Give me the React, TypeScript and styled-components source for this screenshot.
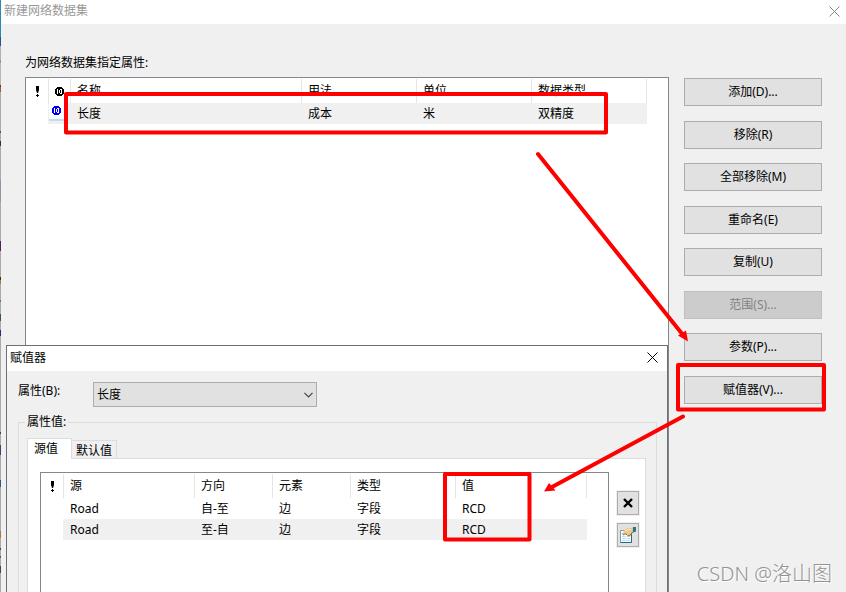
import React from "react";
import styled, { createGlobalStyle } from "styled-components";

const GlobalStyle = createGlobalStyle`
  *, *::before, *::after { box-sizing: border-box; }
  body {
    margin: 0;
    background: #f0f0f0;
    color: #000;
    font: 12px/16px "Noto Sans", "Noto Sans CJK SC", sans-serif;
  }
  button, select { font: inherit; color: inherit; }
`;

const Screen = styled.div`
  position: relative;
  display: flex;
  height: 100vh;
  overflow: hidden;
`;

const DesktopEdge = styled.div`
  flex: none;
  width: 1px;
  background: linear-gradient(
    #2b8ab5 0 37px, #2d4f8c 37px 46px, #b4b0b0 46px 60px, #b08880 60px 63px,
    #b8b8b8 63px 85px, #444 85px 87px, #a05a38 87px 92px, #aaa 92px 131px,
    #555 131px 133px, #aaa 133px 141px, #333 141px 146px, #aaa 146px 180px,
    #8c98a8 180px 202px, #aaa 202px 241px, #5c1a68 241px 251px, #aaa 251px 277px,
    #333 277px 280px, #b07828 280px 284px, #aaa 284px 300px, #3c7ca8 300px 302px,
    #aaa 302px 314px, #356 314px 321px, #aaa 321px 330px, #3c2468 330px 336px,
    #aaa 336px 432px, #444 432px 434px, #aaa 434px 445px, #48406c 445px 455px,
    #aaa 455px 480px, #357 480px 487px, #aaa 487px 531px, #b07838 531px 538px,
    #aaa 538px 548px, #733 548px 550px, #aaa 550px 556px, #368 556px 558px,
    #aaa 558px 566px, #444 566px 573px, #aaa 573px
  );
`;

const Window = styled.main`
  flex: 1;
  min-width: 0;
  display: flex;
  flex-direction: column;
`;

const TitleBar = styled.header<{ $inactive?: boolean }>`
  display: flex;
  flex: none;
  align-items: center;
  justify-content: space-between;
  height: ${(p) => (p.$inactive ? 24 : 25)}px;
  padding: ${(p) => (p.$inactive ? "0 6px 2px 3px" : "0 9px 2px 3px")};
  background: #fff;
  color: ${(p) => (p.$inactive ? "#999" : "#000")};
`;

const Title = styled.h1`
  margin: 0;
  font: inherit;
`;

const CloseButton = styled.button`
  display: flex;
  padding: 0;
  border: 0;
  background: none;
`;

const WindowBody = styled.div`
  flex: 1;
  min-height: 0;
  display: flex;
  gap: 15px;
  padding: 31px 24px 0;
`;

const AttributeSection = styled.section`
  flex: 1;
  min-width: 0;
  display: flex;
  flex-direction: column;
  gap: 6px;
`;

const SectionLabel = styled.h2`
  margin: 0;
  font: inherit;
`;

const ListView = styled.div`
  flex: 1;
  min-width: 0;
  padding-top: 1px;
  overflow: hidden;
  background: #fff;
  border: 1px solid #828790;
  border-bottom: 0;
`;

const Table = styled.table`
  table-layout: fixed;
  width: 0;
  border-collapse: separate;
  border-spacing: 0;
`;

const Col = styled.col<{ $w: number }>`
  width: ${(p) => p.$w}px;
`;

const HeadCell = styled.th`
  height: 24px;
  padding: 0 0 0 6px;
  border-left: 1px solid #e5e5e5;
  text-align: left;
  font-weight: normal;
  white-space: nowrap;
  &:first-child { border-left-color: transparent; }
  &:last-child { border-right: 1px solid #e5e5e5; }
  svg { display: block; }
`;

const Row = styled.tr<{ $shaded?: boolean }>`
  td:not(:first-child) {
    background: ${(p) => (p.$shaded ? "#f0f0f0" : "#fff")};
  }
`;

const Cell = styled.td<{ $icon?: boolean }>`
  height: 21px;
  padding: 0 0 0 ${(p) => (p.$icon ? 1 : 7)}px;
  white-space: nowrap;
`;

const StateBox = styled.span`
  display: flex;
  align-items: center;
  width: 16px;
  height: 18px;
  margin-bottom: 3px;
  padding: 0 0 2px 3px;
  background: #fff;
  border-bottom: 2px solid #c2dcf2;
`;

const Commands = styled.div`
  flex: none;
  display: flex;
  flex-direction: column;
  justify-content: space-between;
  width: 138px;
  height: 326px;
  margin-top: 23px;
`;

const CommandButton = styled.button`
  height: 28px;
  padding: 0;
  background: #e1e1e1;
  border: 1px solid #adadad;
  &:disabled {
    color: #838383;
    background: #ccc;
    border-color: #bfbfbf;
  }
`;

const Dialog = styled.section`
  position: absolute;
  top: 345px;
  bottom: 0;
  left: 6px;
  right: 178px;
  display: flex;
  flex-direction: column;
  background: #f0f0f0;
  border: 1px solid #6b6e73;
  border-bottom: 0;
`;

const DialogBody = styled.div`
  flex: 1;
  min-height: 0;
  display: flex;
  flex-direction: column;
  gap: 7px;
  padding: 11px 10px 0 11px;
`;

const FieldRow = styled.div`
  display: flex;
  align-items: flex-start;
`;

const FieldLabel = styled.label`
  width: 75px;
  padding-top: 1px;
`;

const SelectBox = styled.div`
  display: grid;
  align-items: center;
  width: 224px;
  > * { grid-area: 1 / 1; }
  > svg { justify-self: end; margin-right: 4px; pointer-events: none; }
`;

const Select = styled.select`
  appearance: none;
  width: 100%;
  height: 25px;
  padding: 0 20px 0 3px;
  background: #e1e1e1;
  border: 1px solid #adadad;
  border-radius: 0;
`;

const Group = styled.fieldset`
  flex: 1;
  min-width: 0;
  min-height: 0;
  margin: 0;
  padding: 8px 10px 0 8px;
  border: 1px solid #dcdcdc;
  border-bottom: 0;
`;

const Legend = styled.legend`
  margin-left: -2px;
  padding: 0 2px;
`;

const Tabs = styled.div`
  display: flex;
  align-items: flex-end;
  height: 20px;
`;

const Tab = styled.button<{ $active?: boolean }>`
  width: 45px;
  height: ${(p) => (p.$active ? 21 : 18)}px;
  margin-bottom: ${(p) => (p.$active ? -1 : 0)}px;
  padding: ${(p) => (p.$active ? "0 6px 1px" : "2px 4px 0")};
  text-align: left;
  white-space: nowrap;
  background: ${(p) => (p.$active ? "#fff" : "#f0f0f0")};
  border: 1px solid #dcdcdc;
  border-bottom: 0;
  border-left-width: ${(p) => (p.$active ? 1 : 0)}px;
  z-index: ${(p) => (p.$active ? 1 : 0)};
`;

const TabPanel = styled.div`
  display: flex;
  gap: 8px;
  height: 100vh;
  padding: 13px 6px 0 12px;
  background: #fff;
  border: 1px solid #dcdcdc;
`;

const Tools = styled.div`
  flex: none;
  display: flex;
  flex-direction: column;
  gap: 8px;
  padding-top: 19px;
`;

const ToolButton = styled.button`
  display: flex;
  align-items: center;
  justify-content: center;
  width: 22px;
  height: 24px;
  padding: 0;
  background: #e1e1e1;
  border: 1px solid #adadad;
  box-shadow: 0 0 0 1px #f0f0f0;
`;

const Annotations = styled.svg`
  position: absolute;
  top: 0;
  left: 0;
  pointer-events: none;
`;

const Watermark = styled.div`
  position: absolute;
  right: 14px;
  bottom: 6px;
  color: #929292;
  font-size: 20px;
  font-weight: 300;
  line-height: 24px;
  text-shadow: 1px 1px 0 #fff;
`;

const CloseIcon = ({ color }: { color: string }) => (
  <svg width="11" height="11" viewBox="0 0 11 11" stroke={color}>
    <path d="M.5.5l10 10M10.5.5l-10 10" />
  </svg>
);

const AlertIcon = () => (
  <svg width="9" height="12" viewBox="0 0 9 12">
    <path d="M3 1h3v4l-1 3H4L3 5zM4 9h1v1h1v1H5v1H4v-1H3v-1h1z" />
  </svg>
);

const DefaultIcon = ({ color }: { color: string }) => (
  <svg width="9" height="9" viewBox="0 0 9 9" fill={color}>
    <path
      fillRule="evenodd"
      d="M2 0h5v1h1v1h1v5H8v1H7v1H2V8H1V7H0V2h1V1h1zM2 2v5h5V2z"
    />
    <path fillRule="evenodd" d="M3 2h2v1h1v3H5v1H3zM4 3v3h1V3z" />
  </svg>
);

const ChevronIcon = () => (
  <svg width="9" height="6" viewBox="0 0 9 6" fill="none" stroke="#444">
    <path d="M.5.8l4 4 4-4" strokeWidth="1.2" />
  </svg>
);

const RemoveIcon = () => (
  <svg width="10" height="10" viewBox="0 0 10 10" stroke="#000" strokeWidth="2.4">
    <path d="M1 1l8 8M9 1L1 9" />
  </svg>
);

const PropertiesIcon = () => (
  <svg width="16" height="16" viewBox="0 0 16 16">
    <path d="M.5 3.500h11v12H.5z" fill="#fbfeff" stroke="#6ba3ba" />
    <path d="M.5 15.500h11v-8" fill="none" stroke="#2b6780" />
    <path d="M2 9.500h3.500M6.500 9.500H10M2 11.500h3.500M6.500 11.500H10M2 13.500h3.500M6.500 13.500H10" stroke="#b5deef" />
    <path d="M2.500 6.500L5 2.500 7.500 1H13v4l-2 1.500-1 2H8L7 7.500 5 6.500 3.500 8z" fill="#efc88b" />
    <path d="M2.500 6.500L3.500 8 5 6.700 7 7.700 8 8.700h2l1-2L13 5" fill="none" stroke="#8d672f" />
    <path d="M5 4l3-1.500h3" fill="none" stroke="#ffe9bf" />
    <path d="M13 0h3v4.500l-3 1z" fill="#2f7186" />
    <path d="M12.500.5v4.500" stroke="#a9cdd5" />
  </svg>
);

const commands = [
  "添加(D)...", "移除(R)", "全部移除(M)", "重命名(E)",
  "复制(U)", "范围(S)...", "参数(P)...", "赋值器(V)...",
];

const sources = [
  ["Road", "自-至", "边", "字段", "RCD"],
  ["Road", "至-自", "边", "字段", "RCD"],
];

export default function App() {
  return (
    <Screen>
      <GlobalStyle />
      <DesktopEdge />
      <Window>
        <TitleBar $inactive>
          <Title>新建网络数据集</Title>
          <CloseButton aria-label="关闭"><CloseIcon color="#888" /></CloseButton>
        </TitleBar>
        <WindowBody>
          <AttributeSection>
            <SectionLabel id="attributes">为网络数据集指定属性:</SectionLabel>
            <ListView>
              <Table aria-labelledby="attributes">
                <colgroup>
                  {[22, 22, 231, 115, 115, 116].map((w, i) => <Col key={i} $w={w} />)}
                </colgroup>
                <thead>
                  <tr>
                    <HeadCell><AlertIcon /></HeadCell>
                    <HeadCell><DefaultIcon color="#000" /></HeadCell>
                    {["名称", "用法", "单位", "数据类型"].map((h) => <HeadCell key={h}>{h}</HeadCell>)}
                  </tr>
                </thead>
                <tbody>
                  <Row $shaded>
                    <Cell />
                    <Cell $icon><StateBox><DefaultIcon color="#0000f0" /></StateBox></Cell>
                    {["长度", "成本", "米", "双精度"].map((c) => <Cell key={c}>{c}</Cell>)}
                  </Row>
                </tbody>
              </Table>
            </ListView>
          </AttributeSection>
          <Commands>
            {commands.map((c) => (
              <CommandButton key={c} disabled={c.startsWith("范围")}>{c}</CommandButton>
            ))}
          </Commands>
        </WindowBody>
      </Window>

      <Dialog role="dialog" aria-labelledby="evaluators">
        <TitleBar>
          <Title id="evaluators">赋值器</Title>
          <CloseButton aria-label="关闭"><CloseIcon color="#000" /></CloseButton>
        </TitleBar>
        <DialogBody>
          <FieldRow>
            <FieldLabel htmlFor="attribute">属性(B):</FieldLabel>
            <SelectBox>
              <Select id="attribute"><option>长度</option></Select>
              <ChevronIcon />
            </SelectBox>
          </FieldRow>
          <Group>
            <Legend>属性值:</Legend>
            <Tabs role="tablist">
              <Tab role="tab" aria-selected $active>源值</Tab>
              <Tab role="tab" aria-selected={false}>默认值</Tab>
            </Tabs>
            <TabPanel role="tabpanel">
              <ListView>
                <Table aria-label="源值">
                  <colgroup>
                    {[22, 131, 78, 78, 105, 132].map((w, i) => <Col key={i} $w={w} />)}
                  </colgroup>
                  <thead>
                    <tr>
                      <HeadCell><AlertIcon /></HeadCell>
                      {["源", "方向", "元素", "类型", "值"].map((h) => <HeadCell key={h}>{h}</HeadCell>)}
                    </tr>
                  </thead>
                  <tbody>
                    {sources.map((row, i) => (
                      <Row key={i} $shaded={i === 1}>
                        <Cell />
                        {row.map((c, j) => <Cell key={j}>{c}</Cell>)}
                      </Row>
                    ))}
                  </tbody>
                </Table>
              </ListView>
              <Tools>
                <ToolButton aria-label="移除"><RemoveIcon /></ToolButton>
                <ToolButton aria-label="属性"><PropertiesIcon /></ToolButton>
              </Tools>
            </TabPanel>
          </Group>
        </DialogBody>
      </Dialog>

      <Watermark>CSDN @洛山图</Watermark>
      <Annotations width="846" height="592" viewBox="0 0 846 592" aria-hidden="true">
        <g fill="none" stroke="#f00" strokeWidth="4" strokeLinejoin="round" strokeLinecap="round">
          <rect x="66" y="94" width="540" height="38.500" />
          <rect x="678" y="365" width="146" height="44.500" />
          <rect x="445" y="474" width="84.500" height="65.500" />
          <path d="M538 154L683 335M683 416.500L552 487" />
        </g>
        <path d="M688 341.500L678 335.500 686 330.500zM544 491.500L549 483 555.500 490.500z" fill="#f00" />
      </Annotations>
    </Screen>
  );
}
